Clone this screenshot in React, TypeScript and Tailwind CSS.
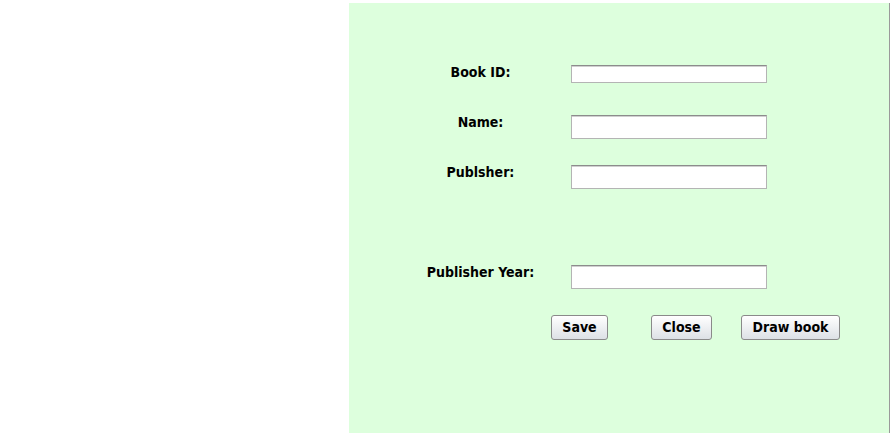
import React from "react";

const font = { fontFamily: '"DejaVu Sans Condensed", "DejaVu Sans", Tahoma, sans-serif' };

function Field({ h }: { h: string }) {
  return (
    <div
      className={`w-[196px] ${h} bg-white border border-[#b4b4b4] border-t-[#8c8c8c] shadow-[inset_0_1px_0_#d0d0d0]`}
    />
  );
}

function Label({ text }: { text: string }) {
  return (
    <div className="w-[103px] text-center text-[14px] font-bold leading-[14px] whitespace-nowrap text-black flex justify-center">
      <span>{text}</span>
    </div>
  );
}

function Btn({ text, w }: { text: string; w: string }) {
  return (
    <button
      className={`${w} h-[25px] rounded-[3px] border border-[#8a8a8a] bg-gradient-to-b from-[#ffffff] to-[#dde1e6] text-[14px] font-bold text-black leading-none flex items-center justify-center pb-[1px]`}
    >
      {text}
    </button>
  );
}

export default function App() {
  return (
    <div className="w-[890px] h-[433px] bg-white flex pt-[3px]" style={font}>
      <div className="w-[349px] shrink-0" />
      <div className="w-[540px] h-[430px] bg-[#ddffdd] shrink-0 flex flex-col pl-[80px] pt-[62px]">
        <div className="flex gap-[39px] h-[18px]">
          <Label text="Book ID:" />
          <Field h="h-[18px]" />
        </div>
        <div className="flex gap-[39px] mt-[32px]">
          <Label text="Name:" />
          <Field h="h-[24px]" />
        </div>
        <div className="flex gap-[39px] mt-[26px]">
          <Label text="Publsher:" />
          <Field h="h-[24px]" />
        </div>
        <div className="flex gap-[39px] mt-[76px]">
          <Label text="Publisher Year:" />
          <Field h="h-[24px]" />
        </div>
        <div className="flex mt-[26px] pl-[122px]">
          <Btn text="Save" w="w-[57px]" />
          <div className="w-[43px]" />
          <Btn text="Close" w="w-[61px]" />
          <div className="w-[29px]" />
          <Btn text="Draw book" w="w-[99px]" />
        </div>
      </div>
      <div className="w-[1px] h-[430px] bg-[#9a9a9a] shrink-0" />
    </div>
  );
}
